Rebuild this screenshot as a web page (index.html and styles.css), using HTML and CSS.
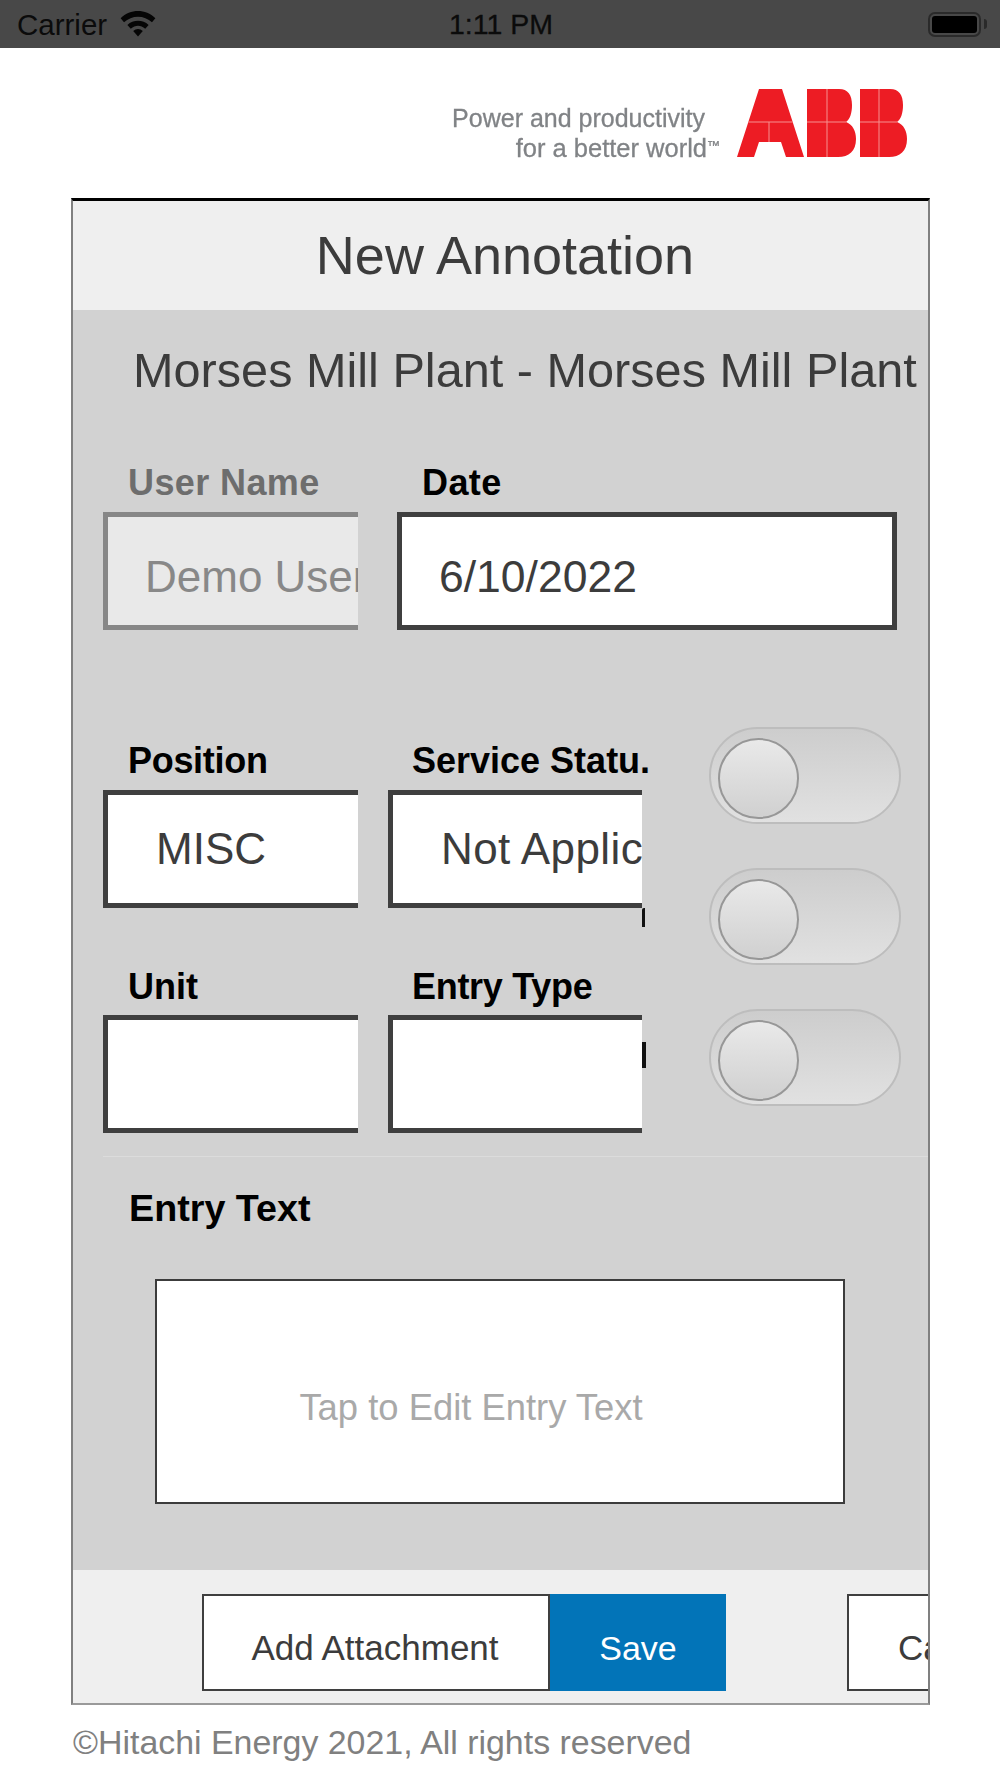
FILE: index.html
```html
<!DOCTYPE html>
<html lang="en">
<head>
<meta charset="utf-8">
<title>New Annotation</title>
<link rel="stylesheet" href="styles.css">
</head>
<body>
<div class="status">
  <div class="status-left">
    <span>Carrier</span>
    <svg class="wifi" viewBox="0 0 36 28" aria-hidden="true">
      <path d="M0 8.500C10 -1.500 26 -1.500 36 8.500L32.500 12.800C24.500 5 11.500 5 3.500 12.800Z"/>
      <path d="M7 15.500C13 9.800 23 9.800 29 15.500L25.500 19.500C20.800 15.200 15.200 15.200 10.500 19.500Z"/>
      <path d="M13 21.800C16 19 20 19 23 21.800L18 27.500Z"/>
    </svg>
  </div>
  <div class="status-time">1:11 PM</div>
  <div class="status-right">
    <div class="battery"><div class="battery-fill"></div></div>
    <div class="battery-cap"></div>
  </div>
</div>

<header class="brand">
  <div class="tagline"><div class="tag-one">Power and productivity</div><div class="tag-two">for a better world<span class="tm">™</span></div></div>
  <svg class="abb" viewBox="0 0 170 68" aria-label="ABB logo" role="img">
    <path class="abb-red" d="M22 0H45L67 68H49L44 53H22L17 68H0Z"/>
    <path class="abb-red" d="M70 0H102C111 0 115 6 115 16C115 24 113 30 109 33C116 36 119 42 119 50C119 62 112 68 101 68H70Z"/>
    <path class="abb-red" d="M123 0H153C162 0 166 6 166 16C166 24 164 30 160 33C167 36 170 42 170 50C170 62 163 68 152 68H123Z"/>
    <path class="abb-line" d="M11.500 33H55.500M32 33V53M70 33H109M123 33H160M90 0V68M142 0V68"/>
  </svg>
</header>

<main class="card">
  <div class="card-head">New Annotation</div>
  <div class="card-body">
    <h2 class="plant">Morses Mill Plant - Morses Mill Plant</h2>

    <div class="row-top">
      <div class="field field-user is-disabled">
        <div class="label">User Name</div>
        <div class="box">Demo User</div>
      </div>
      <div class="field field-date">
        <div class="label">Date</div>
        <div class="box box-full">6/10/2022</div>
      </div>
    </div>

    <div class="mid">
      <div class="mid-fields">
        <div class="mid-row">
          <div class="field field-a">
            <div class="label label-tight">Position</div>
            <div class="box">MISC</div>
          </div>
          <div class="field field-b">
            <div class="label">Service Statu.</div>
            <div class="box">Not Applicable</div>
            <span class="mark mark-service"></span>
          </div>
        </div>
        <div class="mid-row mid-row-second">
          <div class="field field-a">
            <div class="label">Unit</div>
            <div class="box"></div>
          </div>
          <div class="field field-b">
            <div class="label label-tight">Entry Type</div>
            <div class="box"></div>
            <span class="mark mark-entry"></span>
          </div>
        </div>
      </div>
      <div class="toggles">
        <div class="toggle"><div class="knob"></div></div>
        <div class="toggle"><div class="knob"></div></div>
        <div class="toggle"><div class="knob"></div></div>
      </div>
    </div>

    <div class="divider"></div>
    <div class="entry-label">Entry Text</div>
    <div class="entry-text">Tap to Edit Entry Text</div>
  </div>
  <div class="card-foot">
    <div class="btn btn-add">Add Attachment</div>
    <div class="btn btn-save">Save</div>
    <div class="btn btn-cancel">Cancel</div>
  </div>
</main>
<footer class="copy">©Hitachi Energy 2021, All rights reserved</footer>
</body>
</html>
```
FILE: styles.css
```css
* { box-sizing: border-box; }
html, body { margin: 0; padding: 0; }
body {
  width: 1000px;
  height: 1778px;
  overflow: hidden;
  background: #fff;
  font-family: "Liberation Sans", Arial, sans-serif;
  color: #3c3c3c;
}

.status {
  height: 48px;
  background: #484848;
  display: grid;
  grid-template-columns: 1fr auto 1fr;
  align-items: center;
  padding: 1px 13px 0 17px;
  color: #0b0b0b;
  font-size: 29.500px;
}
.status-left { display: flex; align-items: center; gap: 13px; }
.wifi { width: 36px; height: 27px; fill: #050505; margin-top: -2px; }
.status-time { font-size: 28.500px; margin-right: 2px; -webkit-text-stroke: .3px #0b0b0b; }
.status-right { display: flex; justify-content: flex-end; align-items: center; margin-top: -1px; }
.battery {
  width: 53px;
  height: 25px;
  border: 2px solid #2a2a2a;
  border-radius: 7px;
  padding: 2px;
}
.battery-fill { height: 100%; background: #000; border-radius: 3px; }
.battery-cap {
  width: 3px;
  height: 10px;
  margin-left: 3px;
  background: #2a2a2a;
  border-radius: 0 5px 5px 0;
}

.brand {
  height: 150px;
  display: flex;
  justify-content: flex-end;
  align-items: flex-start;
  padding: 41px 93px 0 0;
}
.tagline {
  margin: 16px 17px 0 0;
  font-size: 25px;
  line-height: 27px;
  color: #808386;
  text-align: right;
  filter: blur(.5px);
  -webkit-text-stroke: .3px #808386;
}
.tag-one { margin-right: 15px; }
.tag-two { font-size: 25.500px; }
.tm { font-size: 13px; vertical-align: 7px; }
.abb { width: 170px; height: 68px; display: block; }
.abb-red { fill: #ed1c24; }
.abb-line { fill: none; stroke: #f6908f; stroke-width: 1; }

.card {
  margin-left: 71px;
  width: 859px;
  height: 1507px;
  border-style: solid;
  border-color: #000 #808080 #9a9a9a;
  border-width: 3px 2px 2px;
  display: flex;
  flex-direction: column;
  overflow: hidden;
}
.card-head {
  height: 109px;
  flex: none;
  background: #efefef;
  display: flex;
  align-items: center;
  justify-content: center;
  font-size: 54px;
  padding: 0 0 2px 9px;
}
.card-body {
  flex: 1;
  background: #d2d2d2;
  padding: 32px 0 0 30px;
  overflow: hidden;
}
.plant {
  margin: 0 0 65px 30px;
  font-weight: 400;
  font-size: 48.650px;
  line-height: 56px;
  white-space: nowrap;
}

.row-top { display: flex; gap: 39px; }
.field { position: relative; flex: none; }
.field-user, .field-a { width: 255px; }
.field-date { width: 500px; }
.field-b { width: 254px; }
.label {
  height: 40px;
  margin-bottom: 9px;
  padding-left: 25px;
  font-size: 36px;
  line-height: 40px;
  font-weight: 700;
  color: #000;
  white-space: nowrap;
}
.field-b .label { padding-left: 24px; }
.label-tight { letter-spacing: -.3px; }
.row-top .label { letter-spacing: .4px; }
.box {
  height: 118px;
  background: #fff;
  border: 5px solid #3f3f3f;
  border-right: 0;
  padding-left: 37px;
  font-size: 44px;
  line-height: 108px;
  white-space: nowrap;
  overflow: hidden;
}
.row-top .box { padding-top: 12px; line-height: 96px; }
.field-date .box { font-size: 44.500px; }
.box-full { border-right: 5px solid #3f3f3f; }
.field-a .box { padding-left: 48px; }
.field-b .box { padding-left: 48px; letter-spacing: .4px; }
.is-disabled .label { color: #6d6d6d; }
.is-disabled .box {
  background: #e9e9e9;
  border-color: #878787;
  color: #888;
}

.mid { display: flex; margin-top: 111px; }
.mid-fields { width: 606px; flex: none; }
.mid-row { display: flex; gap: 30px; }
.mid-row-second { margin-top: 59px; }
.mid-row-second .label { margin-bottom: 8px; }
.mark { position: absolute; left: 254px; background: #111; width: 3px; }
.mark-service { top: 167px; height: 19px; border-radius: 2px 0 0 0; }
.mark-entry { top: 75px; height: 26px; width: 4px; }

.toggles {
  display: flex;
  flex-direction: column;
  gap: 44px;
  margin-top: -14px;
}
.toggle {
  width: 192px;
  height: 97px;
  border: 2px solid #bdbdbd;
  border-radius: 49px;
  background: linear-gradient(#cdcdcd, #e1e1e1);
  padding: 9px 7px;
}
.knob {
  width: 81px;
  height: 81px;
  border: 2px solid #979797;
  border-radius: 50%;
  background: linear-gradient(#e9e9e9, #d0d0d0);
}

.divider { height: 1px; background: #dcdcdc; margin-top: 23px; }
.entry-label {
  margin: 31px 0 0 26px;
  font-size: 37.700px;
  line-height: 40px;
  font-weight: 700;
  color: #000;
}
.entry-text {
  margin: 51px 0 0 52px;
  width: 690px;
  height: 225px;
  background: #fff;
  border: 2px solid #3c3c3c;
  color: #a9a9a9;
  font-size: 36.400px;
  display: flex;
  align-items: center;
  justify-content: center;
  padding: 32px 58px 0 0;
}

.card-foot {
  height: 133px;
  flex: none;
  background: #efefef;
  display: flex;
  padding: 24px 0 0 129px;
  overflow: hidden;
}
.btn {
  flex: none;
  height: 97px;
  font-size: 34px;
  display: flex;
  align-items: center;
  background: #fff;
  border: 2px solid #3f3f3f;
  padding-top: 10px;
}
.btn-add { width: 348px; justify-content: center; font-size: 35px; padding-right: 2px; }
.btn-save { width: 176px; background: #0274b8; border: 0; color: #fff; justify-content: center; padding-top: 12px; }
.btn-cancel { width: 200px; margin-left: 121px; padding-left: 49px; font-size: 35px; }

.copy {
  margin: 17px 0 0 73px;
  font-size: 33.900px;
  line-height: 40px;
  color: #808080;
  white-space: nowrap;
}
```
